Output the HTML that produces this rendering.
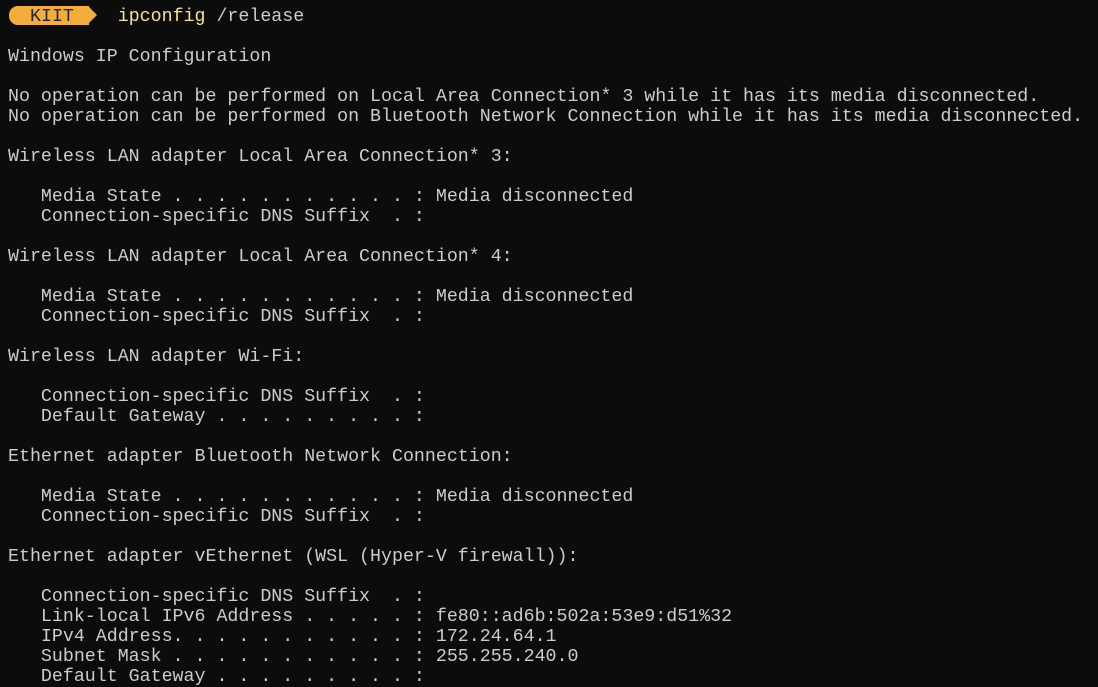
<!DOCTYPE html>
<html><head><style>
html,body{margin:0;padding:0;background:#0c0c0c;width:1098px;height:685px;overflow:hidden}
pre{position:absolute;left:8px;top:7px;margin:0;font-family:"Liberation Mono",monospace;font-size:18.3px;line-height:20px;color:#cccccc;white-space:pre}
.badge{position:absolute;left:9px;top:6px;width:80px;height:19px;background:#f2ad3a;border-radius:9px 0 0 9px}
.arrow{position:absolute;left:88px;top:6px;width:0;height:0;border-top:9.5px solid transparent;border-bottom:9.5px solid transparent;border-left:9px solid #f2ad3a}
.kiit{position:absolute;left:30px;top:7px;font-family:"Liberation Mono",monospace;font-size:18.3px;line-height:20px;color:#1e2640}
.y{color:#f2e58e}
</style></head><body>
<div class="badge"></div><div class="arrow"></div>
<div class="kiit">KIIT</div>
<pre>          <span class="y">ipconfig</span> /release

Windows IP Configuration

No operation can be performed on Local Area Connection* 3 while it has its media disconnected.
No operation can be performed on Bluetooth Network Connection while it has its media disconnected.

Wireless LAN adapter Local Area Connection* 3:

   Media State . . . . . . . . . . . : Media disconnected
   Connection-specific DNS Suffix  . :

Wireless LAN adapter Local Area Connection* 4:

   Media State . . . . . . . . . . . : Media disconnected
   Connection-specific DNS Suffix  . :

Wireless LAN adapter Wi-Fi:

   Connection-specific DNS Suffix  . :
   Default Gateway . . . . . . . . . :

Ethernet adapter Bluetooth Network Connection:

   Media State . . . . . . . . . . . : Media disconnected
   Connection-specific DNS Suffix  . :

Ethernet adapter vEthernet (WSL (Hyper-V firewall)):

   Connection-specific DNS Suffix  . :
   Link-local IPv6 Address . . . . . : fe80::ad6b:502a:53e9:d51%32
   IPv4 Address. . . . . . . . . . . : 172.24.64.1
   Subnet Mask . . . . . . . . . . . : 255.255.240.0
   Default Gateway . . . . . . . . . :</pre>
</body></html>
